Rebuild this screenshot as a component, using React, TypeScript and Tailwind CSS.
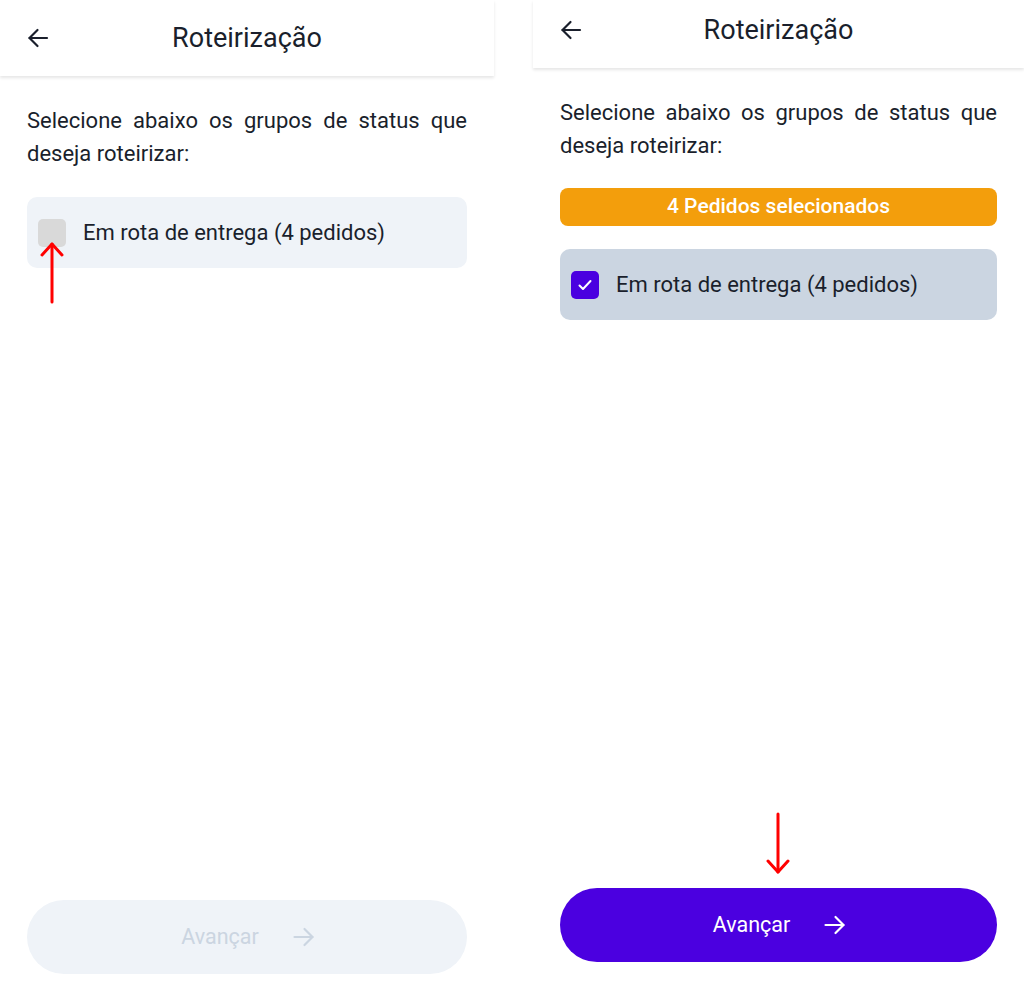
import React from 'react';

const font = { fontFamily: 'Roboto, "Noto Sans", sans-serif' };

function BackArrow() {
  return (
    <svg width="24" height="24" viewBox="0 0 24 24" fill="none" stroke="#1a1f2c" strokeWidth="2.2" strokeLinecap="round" strokeLinejoin="round">
      <path d="M21 12H3.5" />
      <path d="M11.5 4 3.5 12l8 8" />
    </svg>
  );
}

function NextArrow({ color }: { color: string }) {
  return (
    <svg width="22" height="20" viewBox="0 0 22 20" fill="none" stroke={color} strokeWidth="2.2" strokeLinecap="round" strokeLinejoin="round">
      <path d="M1.5 10h18" />
      <path d="M11.5 2l8 8-8 8" />
    </svg>
  );
}

function Header({ tall }: { tall: boolean }) {
  return (
    <div
      className={`flex items-center px-[26px] bg-white shadow-[0_2px_3px_rgba(0,0,0,0.10)] ${
        tall ? 'h-[76px]' : 'h-[68px] pb-[8px]'
      }`}
    >
      <BackArrow />
      <div className="flex-1 text-center text-[27px] text-[#1a1f2c]">Roteirização</div>
      <div className="w-6" />
    </div>
  );
}

function Intro() {
  return (
    <p className="mt-[28px] px-[27px] text-[22px] leading-[33px] text-[#1a1f2c] text-justify">
      Selecione abaixo os grupos de status que deseja roteirizar:
    </p>
  );
}

function StatusRow({ checked }: { checked: boolean }) {
  return (
    <div
      className={`mx-[27px] h-[71px] rounded-[10px] flex items-center pl-[11px] gap-[17px] ${
        checked ? 'bg-[#cbd5e1]' : 'bg-[#eff3f8]'
      }`}
    >
      {checked ? (
        <div className="w-[28px] h-[28px] rounded-[5px] bg-[#4a00e0] flex items-center justify-center">
          <svg width="16" height="16" viewBox="0 0 16 16" fill="none" stroke="#fff" strokeWidth="2" strokeLinecap="round" strokeLinejoin="round">
            <path d="M2.5 8.5l3.5 3.5 7.5-8" />
          </svg>
        </div>
      ) : (
        <div className="w-[28px] h-[28px] rounded-[5px] bg-[#d9d9d9]" />
      )}
      <span className="text-[22px] text-[#1a1f2c]">Em rota de entrega (4 pedidos)</span>
    </div>
  );
}

export default function App() {
  return (
    <div className="flex w-[1024px] h-[989px] bg-white overflow-hidden" style={font}>
      {/* before selecting */}
      <div className="relative w-[494px] h-full flex flex-col">
        <Header tall />
        <Intro />
        <div className="mt-[27px]">
          <StatusRow checked={false} />
        </div>
        <div className="mt-auto mb-[15px] mx-[27px] h-[74px] rounded-full bg-[#eff3f8] flex items-center justify-center gap-[34px] pl-[2px]">
          <span className="text-[21.5px] text-[#cbd5e1]">Avançar</span>
          <NextArrow color="#cbd5e1" />
        </div>
        <svg className="absolute left-[40px] top-[242px]" width="24" height="62" viewBox="0 0 24 62" fill="none" stroke="#ff0000" strokeWidth="3" strokeLinecap="round" strokeLinejoin="round">
          <path d="M12 2v58" />
          <path d="M2 13 12 2l10 11" />
        </svg>
      </div>

      <div className="w-[39px]" />

      {/* after selecting */}
      <div className="relative w-[491px] h-full flex flex-col">
        <Header tall={false} />
        <Intro />
        <div className="mt-[26px] mx-[27px] h-[38px] rounded-[8px] bg-[#f39e0c] flex items-center justify-center text-white text-[21px] font-medium">
          4 Pedidos selecionados
        </div>
        <div className="mt-[23px]">
          <StatusRow checked />
        </div>
        <div className="mt-auto mb-[27px] mx-[27px] h-[74px] rounded-full bg-[#4b00e0] flex items-center justify-center gap-[34px] pl-[2px]">
          <span className="text-[21.5px] text-white">Avançar</span>
          <NextArrow color="#ffffff" />
        </div>
        <svg className="absolute left-[233px] top-[812px]" width="24" height="62" viewBox="0 0 24 62" fill="none" stroke="#ff0000" strokeWidth="3" strokeLinecap="round" strokeLinejoin="round">
          <path d="M12 2v58" />
          <path d="M2 49l10 11 10-11" />
        </svg>
      </div>
    </div>
  );
}
